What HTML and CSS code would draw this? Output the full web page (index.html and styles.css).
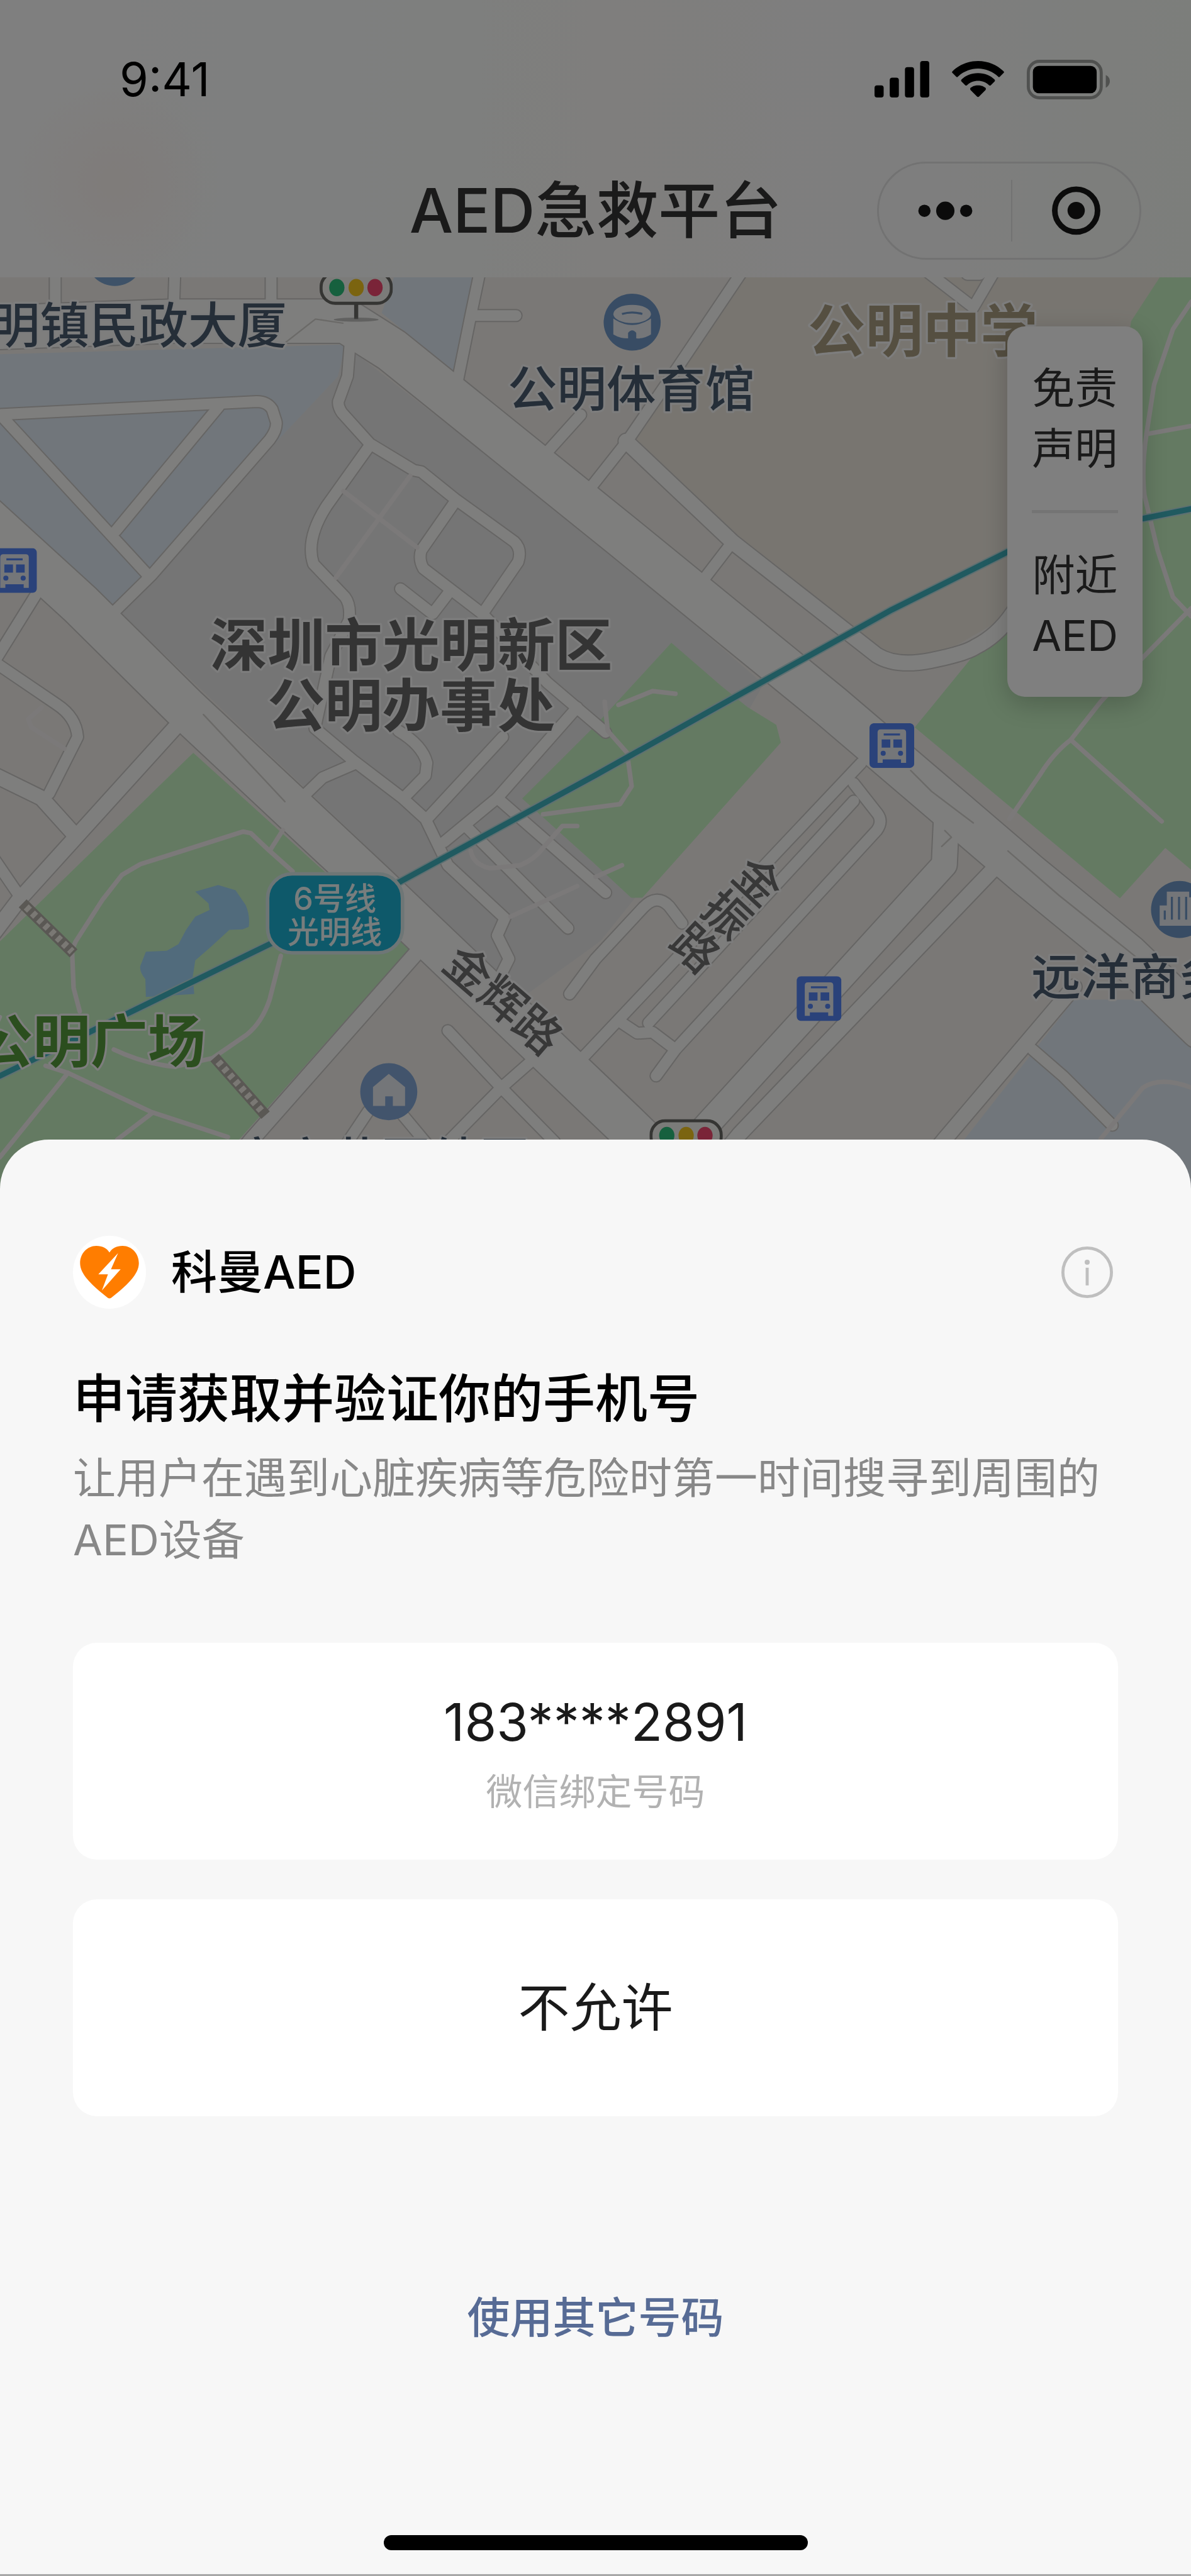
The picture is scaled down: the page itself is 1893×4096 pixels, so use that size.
FILE: index.html
```
<!DOCTYPE html>
<html lang="zh-CN">
<head>
<meta charset="utf-8">
<meta name="viewport" content="width=device-width, initial-scale=1">
<title>AED急救平台</title>
<link rel="stylesheet" href="styles.css">
</head>
<body>
<div class="page">
  <div class="backdrop">
    <header class="header">
      <div class="status-bar">
        <span class="time">9:41</span>
        <div class="status-icons">
          <svg class="signal" viewBox="0 0 108 72" aria-hidden="true">
            <rect x="0" y="48" width="18" height="24" rx="5"/><rect x="30" y="33" width="18" height="39" rx="5"/>
            <rect x="60" y="12" width="18" height="60" rx="5"/><rect x="90" y="0" width="18" height="72" rx="5"/>
          </svg>
          <svg class="wifi" viewBox="0 0 102 72" aria-hidden="true">
            <path d="M51 0C71 0 89 8 101 20Q103 22 102 23L94 31Q92 33 91 31C80 21 66 15 51 15S22 21 11 31Q10 33 8 31L0 23Q-1 22 1 20C13 8 31 0 51 0Z"/>
            <path d="M51 24C64 24 76 29 84 37Q85 39 84 40L76 48Q75 49 73 48C67 42 59 39 51 39S35 42 29 48Q27 49 26 48L18 40Q17 39 18 37C26 29 38 24 51 24Z"/>
            <path d="M51 48C58 48 62 50 66 53Q67 55 66 57L53 70Q51 72 49 70L36 57Q35 55 36 53C40 50 44 48 51 48Z"/>
          </svg>
          <svg class="battery" viewBox="0 0 164 78" aria-hidden="true">
            <rect x="3" y="3" width="144" height="72" rx="22" fill="none" stroke="#000" stroke-opacity=".36" stroke-width="6"/>
            <rect x="12" y="12" width="126" height="54" rx="12"/>
            <path d="M156 30C162 33 164 38 164 42S162 52 156 55Z" fill-opacity=".36"/>
          </svg>
        </div>
      </div>
      <div class="nav-bar">
        <h1 class="nav-title">AED急救平台</h1>
        <div class="capsule">
          <button class="capsule-button capsule-more" type="button" aria-label="更多">
            <svg viewBox="0 0 110 40"><circle cx="14" cy="20" r="12"/><circle cx="55" cy="20" r="18"/><circle cx="96" cy="20" r="12"/></svg>
          </button>
          <button class="capsule-button capsule-close" type="button" aria-label="关闭">
            <svg viewBox="0 0 110 96"><circle cx="55" cy="48" r="42" fill="none" stroke="#171717" stroke-width="11"/><circle cx="55" cy="48" r="17"/></svg>
          </button>
        </div>
      </div>
    </header>

    <main class="map">
      <svg class="map-canvas" viewBox="0 546 2340 1804" preserveAspectRatio="xMidYMin slice">
        <defs>
          <g id="roads-main">
            <path d="M-70 980 158 1188 367 1395 731 1736 1230 2212 1340 2320"/>
            <path d="M-20 645 340 632 680 632 770 689 1220 1052 1634 1390 1880 1600 2020 1720 2215 1880 2360 2020"/>
          </g>
          <g id="roads-wide">
            <path d="M1860 1590 1855 1700 1394 2206 1300 2310"/>
          </g>
          <g id="roads-mid">
            <path d="M1960 1700 1454 2228 1370 2330"/>
            <path d="M343 1432 37 1770 -20 1845"/>
            <path d="M830 1860 495 2240 430 2320"/>
            <path d="M1230 868 1439 1066 1722 1288Q1760 1312 1827 1299T1916 1272Q1960 1250 1990 1205"/>
            <path d="M2110 1940 1856 2239 1790 2320"/>
            <path d="M-10 1524 82 1569 146 1640"/>
          </g>
          <g id="roads-minor">
            <path d="M109 530V600M344 530 342 592M533 530V592"/>
            <path d="M944 530 925 621 900 745M930 621H1014"/>
            <path d="M-10 816 505 790Q525 790 535 805L543 830Q545 845 530 865L299 1130 228 1200"/>
            <path d="M5 820 291 1131M430 800 228 1044"/>
            <path d="M688 675 683 740 665 790Q664 800 672 812L727 873 813 925 828 928 895 982 1010 1065Q1026 1080 1018 1105L948 1207 1075 1342 1190 1440"/>
            <path d="M724 880 642 995Q600 1060 616 1109L678 1174Q690 1190 686 1220L650 1290 619 1432 694 1495 791 1569 836 1610 880 1701 992 1805 977 1839 1000 1885 985 1915"/>
            <path d="M892 990 828 1082Q822 1100 832 1118L948 1207M787 1158 850 1207 880 1168"/>
            <path d="M1461 530 1334 719 1230 871 1140 985M1141 816 1068 897M1435 1071 1376 1148"/>
            <path d="M1815 530 1912 605 1950 540M1900 540H1925"/>
            <path d="M80 1155 -10 1300M-10 1302 112 1385Q150 1410 153 1449L97 1560M-10 1690 37 1759"/>
            <path d="M694 1503 634 1529 600 1562M783 1437Q830 1465 839 1500L836 1525 798 1564"/>
            <path d="M988 1449 839 1610M1134 1391 977 1569 873 1655"/>
            <path d="M977 1569 1190 1755M918 1627 1116 1825"/>
            <path d="M1119 1954 1170 1885 1262 1786Q1290 1755 1315 1782L1340 1815"/>
            <path d="M1692 1500 1130 2095M1677 1575 1274 2011M1677 1540 1724 1600Q1735 1615 1722 1633L1327 2063 1289 2115M1222 2011 1252 2031 1282 2029 1327 2063"/>
            <path d="M880 2026 985 2138 1090 2245M1045 2085 985 2138 860 2265M724 2184 680 2250M790 2190 840 2250"/>
            <path d="M2028 2063 2088 2115 2185 2212"/>
          </g>
          <symbol id="bus" viewBox="0 0 88 88">
            <rect width="88" height="88" rx="9" fill="#5484f4"/>
            <path d="M22 12H66Q72 12 72 18V78H62V71H26V78H16V18Q16 12 22 12Z" fill="#e8ecf2"/>
            <path d="M28 20H60V24H28ZM24 32H41V48H24ZM47 32H64V48H47Z" fill="#5484f4"/>
            <circle cx="27" cy="59" r="5" fill="#5484f4"/><circle cx="61" cy="59" r="5" fill="#5484f4"/>
          </symbol>
          <symbol id="traffic-light" viewBox="0 0 144 100">
            <path d="M72 62V94" stroke="#6a6a66" stroke-width="8"/>
            <ellipse cx="72" cy="95" rx="44" ry="4" fill="#888" opacity=".5"/>
            <rect x="3" y="3" width="138" height="60" rx="28" fill="#f6f6f2" stroke="#6a6a66" stroke-width="6"/>
            <ellipse cx="34" cy="32" rx="15" ry="17" fill="#2cc07c"/><ellipse cx="72" cy="32" rx="15" ry="17" fill="#f6c820"/><ellipse cx="109" cy="32" rx="15" ry="17" fill="#f44870"/>
          </symbol>
        </defs>

        <rect y="540" width="2340" height="1820" fill="#f4f1ed"/>
        <path class="school" d="M1461 540 1230 868 1722 1290 1827 1299 1990 1205 2120 1000 2282 540Z"/>
        <path class="district" d="M679 680 1170 1060 1500 1345 1300 1700 1180 1850 1000 1980 800 1740 239 1207 552 860Z"/>
        <path class="block" d="M0 697 679 678 664 741 552 860 306 1131 224 1190 0 984ZM776 540H936L895 732 750 616ZM2110 1965 2240 1965 2340 2060V2360H1800Z"/>
        <path class="park" d="M1319 1264 1416 1348 1468 1390 1525 1425 1534 1460 1262 1765H1240L1165 1695 1026 1570 1170 1426ZM2282 540 2222 632 2180 900 1990 1205 1909 1293 1830 1390 1797 1430 2200 1766 2289 1667 2340 1710V540ZM380 1480 805 1865 470 2240 400 2360H0V1851Z"/>
        <path class="lake" d="M384 1753Q405 1747 429 1740L463 1750 483 1779Q492 1800 489 1822L477 1827 451 1828 414 1862 384 1888 379 1920 382 1954 287 1960 286 1925Q274 1910 276 1899L287 1871 328 1869 351 1856 366 1828 384 1802 412 1789 410 1776Z"/>

        <g class="casing">
          <use href="#roads-main" stroke-width="90"/><use href="#roads-wide" stroke-width="54"/>
          <use href="#roads-mid" stroke-width="34"/><use href="#roads-minor" stroke-width="26"/>
        </g>
        <g class="surface">
          <use href="#roads-main" stroke-width="85"/><use href="#roads-wide" stroke-width="49"/>
          <use href="#roads-mid" stroke-width="29"/><use href="#roads-minor" stroke-width="21"/>
        </g>
        <path class="path" d="M806 936 660 1136M675 966 820 1077M2340 594 2304 648 2267 757 2252 854Q2242 920 2248 974L2274 1082 2304 1174 2340 1212M2252 854 2340 838M2340 1196 2245 1293 2162 1380 2103 1455Q2070 1480 2043 1523L1983 1610M2106 1457 2282 1615"/>
        <path class="path" d="M82 1391 56 1414 62 1430 127 1472M142 1868 149 1851 201 1770 240 1720 276 1699 478 1635 493 1638 530 1673 575 1713M556 1632 530 1673M142 1868 145 1942 157 1988M552 1879 530 1965Q515 2010 485 2034L418 2080 343 2097Q280 2090 224 2063M90 2095 134 2109 298 2186 448 2235M134 2109 0 2275M298 2189 231 2240"/>
        <path class="path" d="M1003 1802 1134 1742M925 1673Q930 1700 963 1707L1022 1701Q1050 1690 1067 1667L1105 1624H1134M1215 1386 1282 1359 1327 1364M1188 1380 1194 1437 1232 1480 1241 1546 1218 1581 1067 1601M1170 1724 1222 1701M2162 2239 2245 2138Q2280 2115 2340 2138"/>
        <path class="median" d="M560 675 620 628 674 636M1789 1515 1830 1556 1912 1618M1980 1673 2080 1760 2230 1880M1856 1633 1869 1646 1850 1664M400 1405 560 1576"/>
        <path class="stairs-base" d="M45 1776 145 1874M422 2079 522 2192"/>
        <path class="stairs-step" d="M52 1783 142 1871M429 2087 518 2188"/>

        <path class="metro-edge" d="M0 2115 530 1856 787 1733 1170 1524 1409 1390 1752 1199 1980 1085Q2100 1036 2245 1020L2340 1001"/>
        <path class="metro" d="M0 2115 530 1856 787 1733 1170 1524 1409 1390 1752 1199 1980 1085Q2100 1036 2245 1020L2340 1001"/>
        <rect x="526" y="1718" width="265" height="155" rx="48" fill="#1cb2d4" stroke="#dcecec" stroke-width="7"/>
        <g class="metro-label"><text x="658" y="1789">6号线</text><text x="658" y="1855">光明线</text></g>

        <use href="#bus" x="-15" y="1078" width="88" height="88"/>
        <use href="#bus" x="1708" y="1422" width="88" height="88"/>
        <use href="#bus" x="1565" y="1919" width="88" height="88"/>
        <use href="#traffic-light" x="628" y="534" width="144" height="100"/>
        <use href="#traffic-light" x="1276" y="2200" width="144" height="100"/>
        <circle cx="226" cy="507" r="56" fill="#7ca4d0"/>
        <g>
          <circle cx="1242" cy="634" r="56" fill="#7098c8"/>
          <ellipse cx="1242" cy="618" rx="37" ry="18" fill="#e8ecf2"/>
          <path d="M1205 627Q1242 652 1279 627V658Q1265 667 1250 666V655Q1242 645 1234 655V666Q1218 666 1205 658Z" fill="#e8ecf2"/>
          <path d="M1222 618Q1242 612 1262 618" class="seats"/>
        </g>
        <g>
          <circle cx="764" cy="2146" r="56" fill="#84a8d8"/>
          <path d="M764 2111 796 2137V2174H772V2155H757V2174H733V2137Z" fill="#e8ecf2"/>
        </g>
        <g>
          <circle cx="2317" cy="1788" r="56" fill="#7098c8"/>
          <path d="M2278 1820V1780H2292V1753H2336V1764H2346V1820Z" fill="#e8ecf2"/>
          <path d="M2302 1763V1808M2316 1763V1808M2330 1763V1808M2288 1790V1808" class="windows"/>
        </g>

        <g class="poi">
          <text x="564" y="676" text-anchor="end">明镇民政大厦</text>
          <text x="1240" y="801" text-anchor="middle">公明体育馆</text>
          <text x="2026" y="1956">远洋商务</text>
          <text x="749" y="2317" text-anchor="middle">宝安花园幼园</text>
        </g>
        <g class="area">
          <text class="area-school" x="1587" y="692">公明中学</text>
          <text x="808" y="1310" text-anchor="middle">深圳市光明新区</text>
          <text x="808" y="1428" text-anchor="middle">公明办事处</text>
          <text class="area-park" x="404" y="2088" text-anchor="end">公明广场</text>
        </g>
        <g class="street">
          <text x="988" y="1998" transform="rotate(41 988 1966)">金辉路</text>
          <text class="street-vertical" x="1424" y="1793" transform="rotate(43 1424 1793)">金振路</text>
        </g>
      </svg>
      <nav class="side-card">
        <button class="side-item" type="button">免责<br>声明</button>
        <button class="side-item" type="button">附近<br>AED</button>
      </nav>
    </main>
  </div>

  <section class="sheet" role="dialog" aria-labelledby="sheet-title">
    <div class="app-row">
      <svg class="app-logo" viewBox="0 0 144 144" aria-hidden="true">
        <circle cx="72" cy="72" r="72" fill="#fff"/>
        <path d="M76 122Q72 125 68 122L52 109C35 94 14 75 14 54C14 35 28 20 46 20C58 20 67 25 72 33C77 25 86 20 98 20C116 20 130 35 130 54C130 75 109 94 92 109Z" fill="#ff7d00"/>
        <path d="M89 34 50 76H69L57 108 94 66H75Z" fill="#fff"/>
      </svg>
      <span class="app-name">科曼AED</span>
      <button class="info-button" type="button" aria-label="说明">
        <svg viewBox="0 0 102 102"><circle cx="51" cy="51" r="48" fill="none" stroke="#bfbfbf" stroke-width="6"/><circle cx="51" cy="31" r="5"/><rect x="48" y="42" width="6" height="35"/></svg>
      </button>
    </div>
    <h2 class="sheet-title" id="sheet-title">申请获取并验证你的手机号</h2>
    <p class="sheet-text">让用户在遇到心脏疾病等危险时第一时间搜寻到周围的AED设备</p>
    <div class="choices">
      <button class="choice choice-phone" type="button"><span class="phone">183****2891</span><span class="note">微信绑定号码</span></button>
      <button class="choice" type="button">不允许</button>
    </div>
    <a class="other-link" href="#">使用其它号码</a>
    <div class="home-bar"></div>
  </section>
</div>
</body>
</html>
```
FILE: styles.css
```
* { box-sizing: border-box; }

body {
  margin: 0;
  background: #f7f7f7;
  color: #1a1a1a;
  font-family: Inter, "Noto Sans CJK SC", sans-serif;
}

button {
  margin: 0;
  padding: 0;
  border: 0;
  background: none;
  color: inherit;
  font: inherit;
}

svg { display: block; }

.page {
  display: flex;
  flex-direction: column;
  min-height: 100vh;
}

/* Mini program behind the mask */
.backdrop { position: relative; }

.backdrop::after {
  content: "";
  position: absolute;
  inset: 0;
  background: rgba(0, 0, 0, .5);
}

.header {
  padding-bottom: 23px;
  background:
    radial-gradient(circle at 180px 290px, #fff8f5 20px, rgba(255, 248, 245, 0) 170px),
    linear-gradient(90deg, #fff 0%, #fcfffe 30%, #fefdfa 50%, #fdfdfd 75%, #f9fdf7 100%);
}

.status-bar {
  display: flex;
  align-items: center;
  justify-content: space-between;
  height: 252px;
  padding: 0 129px 0 190px;
}

.time {
  color: #000;
  font-size: 74px;
  line-height: 92px;
}

.status-icons {
  display: flex;
  align-items: center;
  gap: 36px;
}

.signal { width: 87px; height: 58px; }
.wifi { width: 83px; height: 58px; overflow: visible; }
.battery { width: 132px; height: 63px; }

.nav-bar {
  display: grid;
  grid-template-columns: 1fr auto 1fr;
  align-items: center;
  height: 166px;
  padding: 0 79px;
}

.nav-title {
  grid-column: 2;
  margin: 0;
  color: #343434;
  font-size: 98px;
  font-weight: 500;
  line-height: 120px;
}

.capsule {
  display: flex;
  justify-self: end;
  align-items: center;
  width: 420px;
  height: 156px;
  border: 3px solid #e4e4e4;
  border-radius: 78px;
}

.capsule-button {
  display: flex;
  align-items: center;
  justify-content: center;
  height: 98px;
}

.capsule-more { flex: 51; }
.capsule-close { flex: 49; border-left: 2px solid #e4e4e4; }
.capsule-button svg { width: 89px; fill: #171717; }

.map {
  position: relative;
  aspect-ratio: 1893 / 1460;
  overflow: hidden;
}

.map-canvas { width: 100%; height: 100%; }

.school { fill: #f0ebe1; }
.district { fill: #ebebeb; }
.block { fill: #e2edf6; }
.park { fill: #c8f4c4; }
.lake { fill: #a2d6f8; }

.casing, .surface, .path, .median, .stairs-base, .stairs-step, .metro, .metro-edge {
  fill: none;
  stroke-linecap: round;
  stroke-linejoin: round;
}

.casing { stroke: #cccac8; }
.surface { stroke: #fdfdfb; }
.path { stroke: #f6f3f3; stroke-width: 9px; }
.median { stroke: #d6d4d0; stroke-width: 3px; }
.stairs-base { stroke: #b4b0a8; stroke-width: 22px; stroke-linecap: butt; }
.stairs-step { stroke: #f4f0e8; stroke-width: 14px; stroke-linecap: butt; stroke-dasharray: 9 8; }
.metro-edge { stroke: #bce0e4; stroke-width: 16px; }
.metro { stroke: #40b4c0; stroke-width: 11px; }
.seats, .windows { fill: none; stroke: #7098c8; stroke-width: 4px; }

.metro-label { fill: #f0fafa; font-size: 62px; font-weight: 500; text-anchor: middle; }

.poi, .area, .street {
  font-weight: 500;
  paint-order: stroke;
  stroke: #fafafa;
  stroke-width: 8px;
  stroke-linejoin: round;
}

.poi { fill: #4a5c70; font-size: 97px; }
.area { fill: #686868; font-size: 113px; font-weight: 700; }
.area-school { fill: #aa9e82; }
.area-park { fill: #569c3c; }
.street { fill: #707070; font-size: 90px; text-anchor: middle; }
.street-vertical { writing-mode: vertical-rl; }

.side-card {
  position: absolute;
  top: 78px;
  right: 77px;
  padding: 0 39px;
  border-radius: 28px;
  background: #fff;
  box-shadow: 0 12px 40px rgba(0, 0, 0, .2);
  color: #343434;
  font-size: 68px;
  line-height: 96px;
}

.side-item {
  display: block;
  padding: 50px 0;
}

.side-item + .side-item { border-top: 5px solid #e8e8e8; }

/* Phone number sheet */
.sheet {
  position: relative;
  display: flex;
  flex: 1;
  flex-direction: column;
  margin-top: -89px;
  padding: 153px 116px 38px;
  border-bottom: 3px solid #a8a8a8;
  border-radius: 78px 78px 0 0;
  background: #f7f7f7;
}

.app-row {
  display: flex;
  align-items: center;
}

.app-logo { width: 116px; height: 116px; }

.app-name {
  margin-left: 40px;
  color: #000;
  font-size: 73px;
  font-weight: 500;
  line-height: 96px;
}

.info-button { margin: 0 8px 0 auto; }
.info-button svg { width: 82px; height: 82px; fill: #bfbfbf; }

.sheet-title {
  margin: 84px 0 0;
  color: #000;
  font-size: 83px;
  font-weight: 500;
  line-height: 118px;
}

.sheet-text {
  margin: 18px 0 0;
  color: #888;
  font-size: 68px;
  line-height: 98px;
}

.choices {
  display: grid;
  gap: 63px;
  margin-top: 115px;
}

.choice {
  min-height: 345px;
  border-radius: 38px;
  background: #fff;
  font-size: 82px;
  line-height: 110px;
}

.choice-phone { padding: 18px 0 0; }
.phone, .note { display: block; }
.note { color: #b2b2b2; font-size: 58px; line-height: 110px; }

.other-link {
  align-self: center;
  margin-top: 271px;
  color: #576b95;
  font-size: 68px;
  font-weight: 500;
  line-height: 98px;
  text-decoration: none;
}

.home-bar {
  align-self: center;
  width: 674px;
  max-width: 100%;
  height: 24px;
  margin-top: auto;
  border-radius: 12px;
  background: #000;
}
```
